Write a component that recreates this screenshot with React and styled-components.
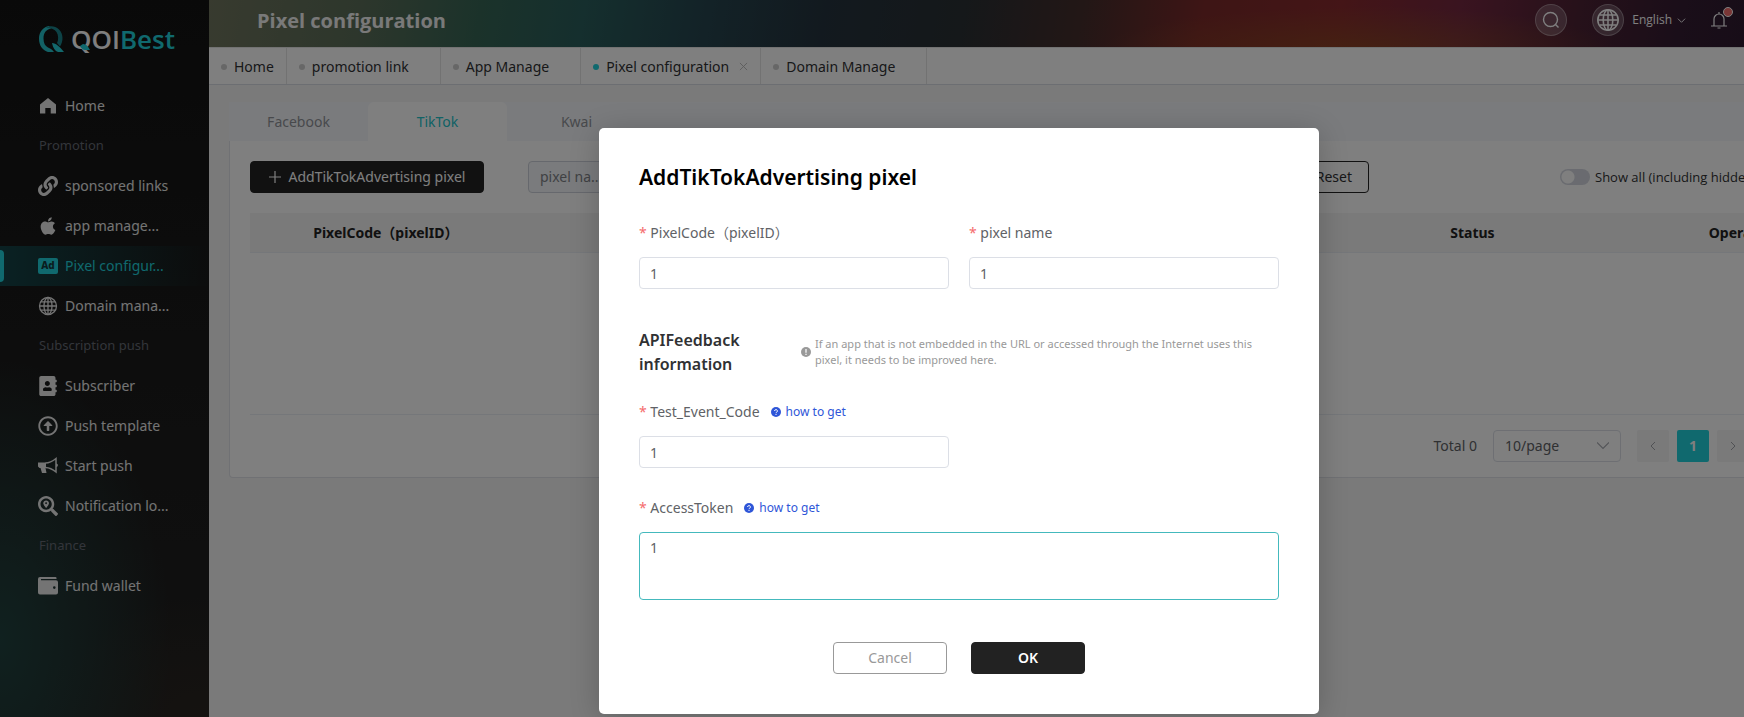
import React from 'react';
import styled, { createGlobalStyle } from 'styled-components';
import { FaLink, FaApple, FaAddressBook, FaRegArrowAltCircleUp, FaSearchLocation } from 'react-icons/fa';

const teal = '#20d2dc';

const GlobalStyle = createGlobalStyle`
  *, *::before, *::after { box-sizing: border-box; }
  body {
    margin: 0;
    overflow: hidden;
    background: #f4f4f4;
    font: 14px/20px 'Noto Sans', 'Noto Sans CJK SC', sans-serif;
    color: #303133;
  }
  button, input, select, textarea { font: inherit; color: inherit; margin: 0; }
`;

const Shell = styled.div`
  position: relative;
  display: flex;
  min-width: 1918px;
  min-height: 100vh;
`;

/* ---------- sidebar ---------- */
const Sidebar = styled.aside`
  flex: 0 0 209px;
  background:
    radial-gradient(ellipse 170px 280px at 0 640px, #21423f 0%, rgba(33, 66, 63, 0) 100%),
    radial-gradient(ellipse 160px 120px at 200px 717px, #2a2521 0%, rgba(42, 37, 33, 0) 100%),
    linear-gradient(#131313, #1c1c1c 60%, #212121);
`;

const Logo = styled.a`
  position: relative;
  display: flex;
  align-items: center;
  gap: 6px;
  height: 86px;
  padding: 0 0 8px 38px;
  color: #fff;
  font-family: 'Open Sans', sans-serif;
  font-size: 26px;
  font-weight: 600;
  line-height: 32px;
  text-decoration: none;
  b { font-weight: 600; color: ${teal}; }
`;

const LogoTail = styled.svg`
  position: absolute;
  left: 80px;
  top: 44px;
`;

const Nav = styled.nav`
  display: flex;
  flex-direction: column;
`;

const NavGroup = styled.div`
  height: 40px;
  padding-left: 39px;
  font-size: 13px;
  line-height: 38px;
  color: #666b75;
`;

const NavItem = styled.a`
  position: relative;
  display: flex;
  align-items: center;
  gap: 7px;
  height: 40px;
  padding-left: 38px;
  color: ${p => (p.$active ? teal : '#e8e8e8')};
  background: ${p => (p.$active ? 'linear-gradient(90deg, #144347, rgba(20, 67, 71, 0))' : 'none')};
  text-decoration: none;
  svg { flex: 0 0 20px; width: 20px; height: 20px; }
  &::before {
    content: '';
    display: ${p => (p.$active ? 'block' : 'none')};
    position: absolute;
    left: 0;
    top: 4px;
    width: 4px;
    height: 32px;
    border-radius: 0 4px 4px 0;
    background: ${teal};
  }
`;

/* ---------- header ---------- */
const Main = styled.div`
  flex: 1;
  min-width: 0;
`;

const Header = styled.header`
  display: flex;
  align-items: center;
  height: 47px;
  padding: 0 191px 7px 48px;
  color: #fff;
  background:
    radial-gradient(ellipse 260px 46px at 1150px 52px, rgba(140, 80, 30, .65), rgba(140, 80, 30, 0)),
    linear-gradient(100deg, #70755e 0%, #5a6d58 9%, #366555 16%, #2a5e5c 22%, #26454f 29%, #25333e 36%, #2a3034 44%, #452e2c 51%, #7c2a2a 58%, #882a2e 66%, #742840 73%, #4c2234 80%, #341c32 86%, #201828 100%);
`;

const PageTitle = styled.h1`
  flex: 1;
  margin: 0;
  padding-top: 2px;
  font-family: 'Open Sans', sans-serif;
  font-size: 20px;
  line-height: 28px;
  font-weight: 700;
  color: #f2f2f2;
`;

const RoundButton = styled.button`
  display: grid;
  place-items: center;
  width: 32px;
  height: 32px;
  padding: 0;
  border: 1px solid rgba(255, 255, 255, .3);
  border-radius: 50%;
  background: rgba(255, 255, 255, .2);
  color: #fff;
`;

const Language = styled.button`
  display: flex;
  align-items: center;
  gap: 5px;
  margin: 0 25px 0 8px;
  padding: 0;
  border: 0;
  background: none;
  font-family: 'Open Sans', sans-serif;
  font-size: 12px;
`;

const HeaderTools = styled.div`
  display: flex;
  align-items: center;
`;

const SearchSlot = styled.div`
  margin-right: 25px;
`;

const Bell = styled.button`
  position: relative;
  display: flex;
  padding: 0;
  border: 0;
  background: none;
  &::after {
    content: '';
    position: absolute;
    right: -6px;
    top: -5px;
    width: 10px;
    height: 10px;
    border: 1px solid #fff;
    border-radius: 50%;
    background: #f56c6c;
  }
`;

/* ---------- visited page tabs ---------- */
const PageTabs = styled.nav`
  display: flex;
  height: 38px;
  background: #fff;
  border-top: 1px solid #e4e4e4;
  border-bottom: 1px solid #d8dce5;
`;

const PageTab = styled.a`
  display: flex;
  align-items: center;
  gap: 7px;
  padding: 1px 12px 0;
  border-right: 1px solid #e4e4e4;
  color: #303133;
  text-decoration: none;
  &::before {
    content: '';
    width: 6px;
    height: 6px;
    border-radius: 50%;
    background: ${p => (p.$active ? teal : '#cfcfcf')};
  }
`;

const CloseSlot = styled.span`
  display: flex;
  justify-content: flex-end;
  width: 12px;
  color: #b8b8b8;
`;

/* ---------- content card ---------- */
const Content = styled.main`
  padding: 17px 17px 17px 20px;
`;

const ChannelTabs = styled.div`
  display: flex;
  background: #f5f7fa;
`;

const ChannelTab = styled.button`
  width: 139px;
  height: 39px;
  padding: 0;
  border: 0;
  border-radius: 6px 6px 0 0;
  background: ${p => (p.$active ? '#fff' : 'none')};
  color: ${p => (p.$active ? '#22c4cb' : '#909399')};
`;

const CardBody = styled.div`
  padding: 20px 20px 15px;
  border: 1px solid #e0e2e8;
  border-top: 0;
  border-radius: 0 0 4px 4px;
  background: #fff;
`;

const Toolbar = styled.div`
  display: flex;
  align-items: center;
  margin-bottom: 20px;
`;

const Filters = styled.div`
  display: flex;
  justify-content: space-between;
  flex: 0 0 841px;
  margin-left: 44px;
`;

const Button = styled.button`
  display: inline-flex;
  align-items: center;
  justify-content: center;
  gap: 8px;
  height: 32px;
  min-width: ${p => p.$width || 0}px;
  padding: 0 16px;
  border: 1px solid ${p => (p.$solid ? '#222' : p.$muted ? '#999' : '#222')};
  border-radius: 4px;
  background: ${p => (p.$solid ? '#222' : '#fff')};
  color: ${p => (p.$solid ? '#fff' : p.$muted ? '#999' : '#303133')};
  font-weight: ${p => (p.$strong ? 600 : 400)};
`;

const FilterSelect = styled.select`
  width: 120px;
  height: 32px;
  padding: 0 11px;
  appearance: none;
  border: 1px solid #cdd1da;
  border-radius: 4px;
  background: #f5f7fa;
  color: #808389;
`;

const SwitchLabel = styled.label`
  display: flex;
  align-items: center;
  gap: 5px;
  flex: 0 0 320px;
  margin-left: auto;
  font-family: 'Open Sans', sans-serif;
  font-size: 13px;
`;

const Switch = styled.input`
  appearance: none;
  width: 30px;
  height: 16px;
  border-radius: 8px;
  background: radial-gradient(circle at 8px 8px, #fff 6px, transparent 7px), #d4d7e0;
`;

const Table = styled.table`
  width: 100%;
  table-layout: fixed;
  border-collapse: separate;
  border-spacing: 0;
  th {
    height: 40px;
    padding: 0;
    background: #f4f4f4;
    border-bottom: 1px solid #ebeef5;
    font-weight: 700;
    color: #222;
  }
  td {
    height: 162px;
    border-bottom: 1px solid #ebeef5;
  }
`;

const Pagination = styled.div`
  display: flex;
  align-items: center;
  justify-content: flex-end;
  gap: 8px;
  padding: 15px 131px 0 0;
  color: #606266;
`;

const PageSize = styled.div`
  display: flex;
  align-items: center;
  margin: 0 8px;
  svg { margin: 0 12px 0 -24px; color: #a8abb2; pointer-events: none; }
`;

const PageSizeSelect = styled.select`
  width: 128px;
  height: 32px;
  padding: 0 11px;
  appearance: none;
  border: 1px solid #dcdfe6;
  border-radius: 4px;
  background: transparent;
`;

const PageButton = styled.button`
  display: grid;
  place-items: center;
  width: 32px;
  height: 32px;
  padding: 0;
  border: 0;
  border-radius: 2px;
  background: ${p => (p.$active ? teal : '#f4f4f5')};
  color: ${p => (p.$active ? '#fff' : '#a0a3a8')};
  font-weight: 700;
`;

/* ---------- dialog ---------- */
const Overlay = styled.div`
  position: absolute;
  inset: 0;
  display: flex;
  justify-content: center;
  align-items: flex-start;
  padding-top: 128px;
  background: rgba(0, 0, 0, .5);
`;

const Dialog = styled.form`
  width: 720px;
  padding: 34px 40px 40px;
  border-radius: 5px;
  background: #fff;
  box-shadow: 0 4px 30px rgba(0, 0, 0, .2);
  color: #606266;
`;

const DialogTitle = styled.h2`
  margin: 0 0 26px;
  font-size: 21px;
  line-height: 30px;
  font-weight: 600;
  color: #000;
`;

const FieldGrid = styled.div`
  display: grid;
  grid-template-columns: 1fr 1fr;
  gap: 0 20px;
`;

const LabelRow = styled.div`
  display: flex;
  align-items: center;
  gap: 11px;
  height: 30px;
  margin-bottom: 9px;
  label::before { content: '* '; color: #f56c6c; }
`;

const TextInput = styled.input`
  display: block;
  width: 100%;
  height: 32px;
  padding: 0 10px;
  border: 1px solid #dcdfe6;
  border-radius: 4px;
  background: #fff;
`;

const TextArea = styled.textarea`
  display: block;
  width: 100%;
  height: 68px;
  padding: 5px 10px;
  resize: none;
  outline: 0;
  border: 1px solid #44b9bd;
  border-radius: 4px;
`;

const Section = styled.div`
  display: flex;
  align-items: center;
  gap: 4px;
  margin: 39px 0 21px;
`;

const SectionTitle = styled.h3`
  flex: 0 0 158px;
  margin: 0;
  font-size: 16px;
  line-height: 24px;
  font-weight: 600;
  color: #303133;
`;

const Hint = styled.p`
  display: flex;
  align-items: center;
  gap: 4px;
  margin: 0;
  font-size: 11px;
  line-height: 16px;
  color: #999;
  svg { flex: 0 0 10px; }
`;

const HelpLink = styled.a`
  display: flex;
  align-items: center;
  gap: 5px;
  font-size: 12px;
  color: #2f56d8;
  text-decoration: none;
`;

const Spacer = styled.div`
  height: 25px;
`;

const DialogActions = styled.div`
  display: flex;
  justify-content: center;
  gap: 24px;
  padding-top: 42px;
`;

/* ---------- icons ---------- */
const LogoMark = () => (
  <svg width="27" height="28" viewBox="0 0 27 28" aria-hidden="true">
    <path d="M11 1C5 2 1 7 1 13.500 1 21 5 25.500 10 27h6c-2-3-4-3.500-6-4.500C7 21 5.500 18 5.500 13.500 5.500 8 8 4.500 13 3.500z" fill="#26c3cb" />
    <path d="M8 3c3-2.500 9-2.500 13 1.500 4.500 4.500 4.500 12 1 17l-3-3.500c1.700-3 1.500-8-.5-11C16.500 4 12 2.500 8 3z" fill="#1a858c" />
    <path d="M14 18c4 0 8 4 12 9h-6c-3-1-5-4-6-9z" fill="#26d0d8" />
  </svg>
);

const HomeIcon = () => (
  <svg viewBox="0 0 20 20" fill="currentColor">
    <path d="M10 2l8 6.500v9h-5.300v-5.500H7.300v5.500H2v-9z" />
  </svg>
);

const AdIcon = () => (
  <svg viewBox="0 0 20 20">
    <rect y="2" width="20" height="16" rx="2" fill="currentColor" />
    <text x="10" y="13" textAnchor="middle" fontSize="10" fontWeight="800" fill="#14383b">Ad</text>
  </svg>
);

const GlobeIcon = ({ size = 20 }) => (
  <svg width={size} height={size} viewBox="0 0 20 20" fill="none" stroke="currentColor" strokeWidth="1.300">
    <circle cx="10" cy="10" r="8.500" />
    <ellipse cx="10" cy="10" rx="4" ry="8.500" />
    <path d="M10 1.500v17M1.500 10h17M3 5.800h14M3 14.200h14" />
  </svg>
);

const MegaphoneIcon = () => (
  <svg viewBox="0 0 20 20">
    <path d="M0 6.500h8v5.500H7.500l1 5H4l-1.500-5H1.500L0 10.500z" fill="currentColor" />
    <path d="M7.500 7C12 7 15.500 4.500 18 2.500v13.500c-3-2.500-6-4.300-10.500-4.500" fill="none" stroke="currentColor" strokeWidth="1.500" />
    <path d="M18 7.500c2.500 0 2.500 3.500 0 3.500z" fill="currentColor" />
  </svg>
);

const WalletIcon = () => (
  <svg viewBox="0 0 20 20" fill="currentColor">
    <path d="M2 1h15.500a1 1 0 0 1 1 1v1H3v1.200h15a2 2 0 0 1 2 2V16.500a2 2 0 0 1-2 2H2a2 2 0 0 1-2-2V3a2 2 0 0 1 2-2zM16.300 10.300a1.300 1.300 0 1 0 .01 2.600 1.300 1.300 0 0 0 0-2.600z" fillRule="evenodd" />
  </svg>
);

const SearchIcon = () => (
  <svg width="18" height="18" viewBox="0 0 18 18" fill="none" stroke="currentColor" strokeWidth="1.400">
    <circle cx="8.500" cy="8.500" r="7" />
    <path d="M13.500 13.500l3 3" />
  </svg>
);

const BellIcon = () => (
  <svg width="16" height="17" viewBox="0 0 16 17" fill="none" stroke="#fff" strokeWidth="1.200">
    <path d="M8 0v2M3 14V7a5 5 0 0 1 10 0v7M0 14h16M6.500 16h3" />
  </svg>
);

const Chevron = ({ d, size = 10 }) => (
  <svg width={size} height={size} viewBox="0 0 10 10" fill="none" stroke="currentColor" strokeWidth="1">
    <path d={d} />
  </svg>
);

const DotIcon = ({ color, size, children }) => (
  <svg width={size} height={size} viewBox="0 0 10 10" aria-hidden="true">
    <circle cx="5" cy="5" r="5" fill={color} />
    {children}
  </svg>
);

const How = () => (
  <HelpLink href="#help">
    <DotIcon color="#2f56d8" size={10}>
      <path d="M3.600 4a1.400 1.400 0 1 1 1.900 1.300q-.5.2-.5.900M5 7v1" fill="none" stroke="#fff" strokeWidth="1" />
    </DotIcon>
    how to get
  </HelpLink>
);

const menu = [
  { label: 'Home', icon: <HomeIcon /> },
  { group: 'Promotion' },
  { label: 'sponsored links', icon: <FaLink /> },
  { label: 'app manage...', icon: <FaApple /> },
  { label: 'Pixel configur...', icon: <AdIcon />, active: true },
  { label: 'Domain mana...', icon: <GlobeIcon /> },
  { group: 'Subscription push' },
  { label: 'Subscriber', icon: <FaAddressBook /> },
  { label: 'Push template', icon: <FaRegArrowAltCircleUp /> },
  { label: 'Start push', icon: <MegaphoneIcon /> },
  { label: 'Notification lo...', icon: <FaSearchLocation /> },
  { group: 'Finance' },
  { label: 'Fund wallet', icon: <WalletIcon /> },
];

const pages = ['Home', 'promotion link', 'App Manage', 'Pixel configuration', 'Domain Manage'];

export default function App() {
  return (
    <>
      <GlobalStyle />
      <Shell>
        <Sidebar>
          <Logo href="#home">
            <LogoMark />
            <span>QOI<b>Best</b></span>
            <LogoTail width="10" height="6" viewBox="0 0 10 6" aria-hidden="true">
              <path d="M0 2l3-2c3 0 5 2 7 6H5C3 6 1 4 0 2z" fill={teal} />
            </LogoTail>
          </Logo>
          <Nav>
            {menu.map(m => m.group
              ? <NavGroup key={m.group}>{m.group}</NavGroup>
              : <NavItem key={m.label} href="#menu" $active={m.active}>{m.icon}{m.label}</NavItem>)}
          </Nav>
        </Sidebar>

        <Main>
          <Header>
            <PageTitle>Pixel configuration</PageTitle>
            <HeaderTools>
              <SearchSlot>
                <RoundButton aria-label="Search"><SearchIcon /></RoundButton>
              </SearchSlot>
              <RoundButton aria-label="Region"><GlobeIcon size={24} /></RoundButton>
              <Language>English <Chevron d="M1 3l4 4 4-4" size={9} /></Language>
              <Bell aria-label="Notifications"><BellIcon /></Bell>
            </HeaderTools>
          </Header>

          <PageTabs>
            {pages.map(p => (
              <PageTab key={p} href="#page" $active={p === 'Pixel configuration'}>
                {p}
                {p !== 'Home' && (
                  <CloseSlot>
                    {p === 'Pixel configuration' && <Chevron d="M1 1l8 8M9 1l-8 8" size={9} />}
                  </CloseSlot>
                )}
              </PageTab>
            ))}
          </PageTabs>

          <Content>
            <ChannelTabs>
              <ChannelTab>Facebook</ChannelTab>
              <ChannelTab $active>TikTok</ChannelTab>
              <ChannelTab>Kwai</ChannelTab>
            </ChannelTabs>
            <CardBody>
              <Toolbar>
                <Button $solid $width={234}>
                  <Chevron d="M5 0v10M0 5h10" size={12} />
                  AddTikTokAdvertising pixel
                </Button>
                <Filters>
                  <FilterSelect aria-label="Filter by">
                    <option>pixel na...</option>
                  </FilterSelect>
                  <Button>Reset</Button>
                </Filters>
                <SwitchLabel>
                  <Switch type="checkbox" />
                  Show all (including hidden)
                </SwitchLabel>
              </Toolbar>
              <Table>
                <thead>
                  <tr>
                    <th>PixelCode（pixelID）</th>
                    <th /><th /><th />
                    <th>Status</th>
                    <th>Operation</th>
                  </tr>
                </thead>
                <tbody>
                  <tr><td colSpan={6} /></tr>
                </tbody>
              </Table>
              <Pagination>
                <span>Total 0</span>
                <PageSize>
                  <PageSizeSelect aria-label="Page size"><option>10/page</option></PageSizeSelect>
                  <Chevron d="M0 2l5 5 5-5" size={12} />
                </PageSize>
                <PageButton aria-label="Previous page"><Chevron d="M7 1L3 5l4 4" /></PageButton>
                <PageButton $active>1</PageButton>
                <PageButton aria-label="Next page"><Chevron d="M3 1l4 4-4 4" /></PageButton>
              </Pagination>
            </CardBody>
          </Content>
        </Main>

        <Overlay>
          <Dialog role="dialog" aria-labelledby="dialog-title">
            <DialogTitle id="dialog-title">AddTikTokAdvertising pixel</DialogTitle>
            <FieldGrid>
              <div>
                <LabelRow><label htmlFor="code">PixelCode（pixelID）</label></LabelRow>
                <TextInput id="code" defaultValue="1" />
              </div>
              <div>
                <LabelRow><label htmlFor="name">pixel name</label></LabelRow>
                <TextInput id="name" defaultValue="1" />
              </div>
            </FieldGrid>
            <Section>
              <SectionTitle>APIFeedback information</SectionTitle>
              <Hint>
                <DotIcon color="#999" size={10}>
                  <path d="M5 2v3.700M5 6.800v1.200" stroke="#fff" strokeWidth="1.200" />
                </DotIcon>
                If an app that is not embedded in the URL or accessed through the Internet uses this pixel, it needs to be improved here.
              </Hint>
            </Section>
            <FieldGrid>
              <div>
                <LabelRow><label htmlFor="event">Test_Event_Code</label><How /></LabelRow>
                <TextInput id="event" defaultValue="1" />
              </div>
            </FieldGrid>
            <Spacer />
            <LabelRow><label htmlFor="token">AccessToken</label><How /></LabelRow>
            <TextArea id="token" defaultValue="1" />
            <DialogActions>
              <Button type="button" $muted $width={114}>Cancel</Button>
              <Button type="button" $solid $strong $width={114}>OK</Button>
            </DialogActions>
          </Dialog>
        </Overlay>
      </Shell>
    </>
  );
}
